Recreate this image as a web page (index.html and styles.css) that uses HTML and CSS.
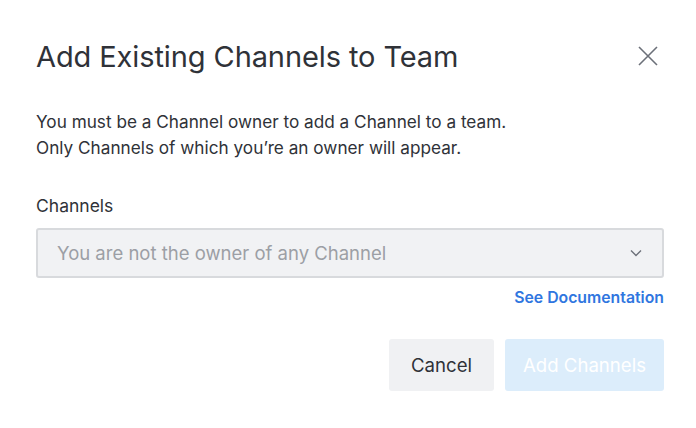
FILE: index.html
```html
<!DOCTYPE html>
<html>
<head>
<meta charset="utf-8">
<link rel="stylesheet" href="styles.css">
</head>
<body>
<div class="dialog">
  <div class="header">
    <h1 class="title">Add Existing Channels to Team</h1>
    <button class="close" aria-label="Close">
      <svg width="22" height="22" viewBox="0 0 22 22"><path d="M2 2L20 20M20 2L2 20" stroke="#6c7079" stroke-width="1.6" fill="none"/></svg>
    </button>
  </div>
  <p class="desc">You must be a Channel owner to add a Channel to a team.<br>Only Channels of which you’re an owner will appear.</p>
  <label class="label">Channels</label>
  <div class="select">
    <span class="placeholder">You are not the owner of any Channel</span>
    <svg class="chev" width="12" height="8" viewBox="0 0 12 8"><path d="M1 1.5L6 6.5L11 1.5" stroke="#6c7079" stroke-width="1.4" fill="none"/></svg>
  </div>
  <div class="doc-row"><a class="doc" href="#">See Documentation</a></div>
  <div class="actions">
    <button class="btn cancel">Cancel</button>
    <button class="btn primary">Add Channels</button>
  </div>
</div>
</body>
</html>
```
FILE: styles.css
```css
html, body {
  margin: 0;
  padding: 0;
  background: #fff;
  font-family: Inter, "Noto Sans", sans-serif;
  color: #2f3238;
}
.dialog {
  width: 696px;
  height: 428px;
  box-sizing: border-box;
  padding: 36px 32px 0 36px;
}
.header {
  display: flex;
  align-items: center;
  justify-content: space-between;
  height: 40px;
}
.title {
  margin: 0;
  font-size: 29px;
  font-weight: 400;
  color: #2f3238;
  letter-spacing: -0.1px;
}
.close {
  border: 0;
  background: none;
  padding: 0;
  margin-right: 5px;
  width: 22px;
  height: 22px;
  display: flex;
}
.desc {
  margin: 33px 0 0 0;
  font-size: 17.2px;
  line-height: 26px;
  color: #2f3238;
}
.label {
  display: block;
  margin-top: 32px;
  font-size: 17.5px;
  line-height: 26px;
  color: #2f3238;
}
.select {
  margin-top: 9px;
  height: 50px;
  box-sizing: border-box;
  border: 2px solid #d8dadd;
  border-radius: 3px;
  background: #f1f2f4;
  display: flex;
  align-items: center;
  justify-content: space-between;
  padding: 0 20px 0 19px;
}
.placeholder {
  font-size: 18.5px;
  color: #9c9fa5;
}
.doc-row {
  display: flex;
  justify-content: flex-end;
  margin-top: 10px;
}
.doc {
  color: #2f76e0;
  font-size: 15.8px;
  font-weight: 600;
  text-decoration: none;
  line-height: 20px;
}
.actions {
  display: flex;
  justify-content: flex-end;
  gap: 11px;
  margin-top: 31px;
}
.btn {
  height: 52px;
  border: 0;
  border-radius: 3px;
  font-family: Inter, "Noto Sans", sans-serif;
  font-size: 18.6px;
  padding: 0;
}
.cancel {
  width: 105px;
  background: #f0f1f3;
  color: #2f3238;
}
.primary {
  width: 159px;
  background: #dcedfb;
  color: #ffffff;
}
```
